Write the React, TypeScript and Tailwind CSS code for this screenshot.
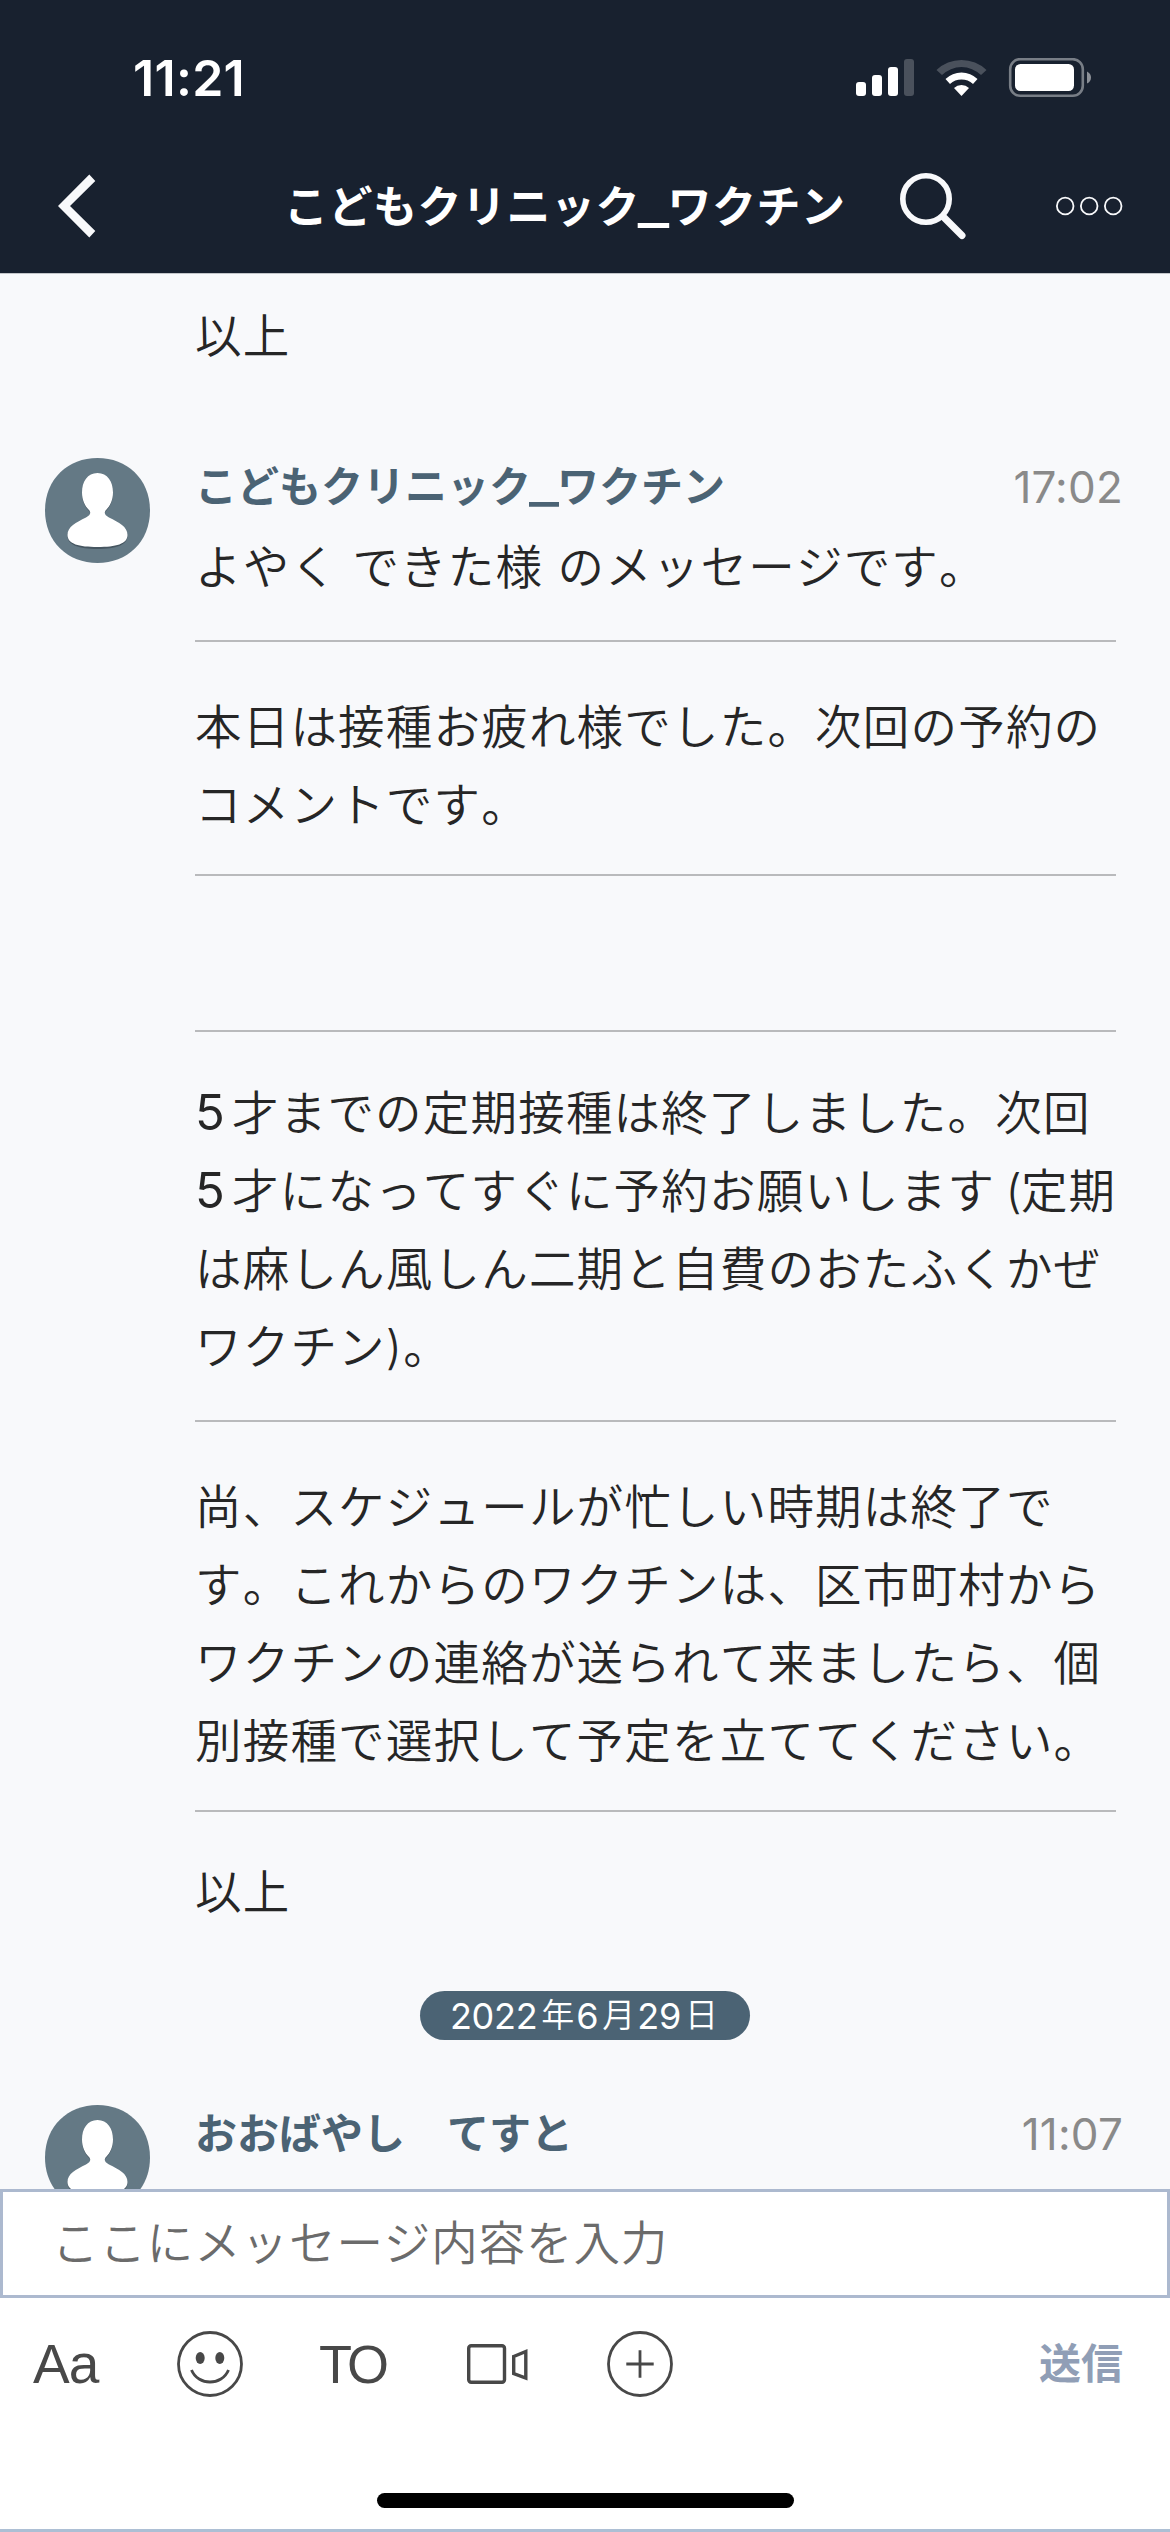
import { Fragment, type ReactNode } from 'react';

type Block = { lines: string[]; rule?: string };

// rule = spacing around the divider above the block
const messageBlocks: Block[] = [
  { lines: ['よやく できた様 のメッセージです。'] },
  { rule: 'mt-[34px] mb-[46px]', lines: ['本日は接種お疲れ様でした。次回の予約の', 'コメントです。'] },
  { rule: 'mt-[30px]', lines: [] },
  { rule: 'mt-[154px] mb-[42px]', lines: ['5才までの定期接種は終了しました。次回', '5才になってすぐに予約お願いします (定期', 'は麻しん風しん二期と自費のおたふくかぜ', 'ワクチン)。'] },
  { rule: 'mt-[34px] mb-[46px]', lines: ['尚、スケジュールが忙しい時期は終了で', 'す。これからのワクチンは、区市町村から', 'ワクチンの連絡が送られて来ましたら、個', '別接種で選択して予定を立ててください。'] },
  { rule: 'mt-[30px] mb-[41px]', lines: ['以上'] },
];

function StatusBar() {
  return (
    <div className="flex h-[156px] items-center justify-between pl-[133px] pr-[79px] text-white">
      <span className="text-[50px] font-semibold leading-none tracking-[0.3px]">11:21</span>
      <svg width="236" height="40" viewBox="855 58 236 40" fill="#fff">
        <rect x="856" y="82" width="10" height="14" rx="3" />
        <rect x="872" y="75" width="10" height="21" rx="3" />
        <rect x="888" y="67" width="10" height="29" rx="3" />
        <rect x="904" y="59" width="10" height="37" rx="3" opacity="0.22" />
        <path d="M936.5 70 A36 36 0 0 1 986.5 70 L981 75 A28 28 0 0 0 942 75 Z" opacity="0.22" />
        <path d="M945.5 79 A23 23 0 0 1 977.5 79 L973 84 A17 17 0 0 0 950 84 Z" />
        <path d="M954 88 A11 11 0 0 1 969 88 L961.5 96 Z" />
        <rect x="1010.2" y="59.2" width="72.6" height="36.6" rx="10" fill="none" stroke="#fff" strokeOpacity="0.42" strokeWidth="2.6" />
        <rect x="1015" y="64" width="59" height="27" rx="5.5" />
        <path d="M1087 71.5 Q1091 73.5 1091 77.5 Q1091 81.5 1087 83.5 Z" opacity="0.5" />
      </svg>
    </div>
  );
}

function RoomName({ text }: { text: string }) {
  const [head, tail] = text.split('_');
  return (
    <>
      {head}
      {tail && <span className="mx-[3px] inline-block scale-x-150">_</span>}
      {tail}
    </>
  );
}

function NavBar() {
  return (
    <div className="flex h-[117px] items-start">
      <svg className="ml-[57px] mt-[17px]" width="40" height="66" viewBox="57 173 40 66" fill="#f8f9fb">
        <path d="M58 206 L89.3 174.5 L95.3 181 L70 206 L95.3 231 L89.3 237.5 Z" />
      </svg>
      <h1 className="ml-[187px] mt-[21px] w-[571px] whitespace-nowrap text-[44px] font-bold leading-[60px] tracking-[0.5px] text-white">
        <RoomName text="こどもクリニック_ワクチン" />
      </h1>
      <svg className="ml-[42px] mt-[15px]" width="70" height="70" viewBox="897 171 70 70" fill="none" stroke="#f8f9fb" strokeWidth="5.6">
        <circle cx="926" cy="199" r="23.2" />
        <path d="M943.5 217 L962 235.5" strokeWidth="7" strokeLinecap="round" />
      </svg>
      <svg className="ml-[88px] mt-[40px]" width="68" height="20" viewBox="1055 196 68 20" fill="none" stroke="#f8f9fb" strokeWidth="1.8">
        <circle cx="1065.2" cy="206" r="8.3" />
        <circle cx="1089.2" cy="206" r="8.3" />
        <circle cx="1113.2" cy="206" r="8.3" />
      </svg>
    </div>
  );
}

function Avatar() {
  return (
    <svg className="ml-[45px] w-[105px] shrink-0" width="105" height="105" viewBox="0 0 105 105">
      <path d="M52.5 0 C82 0 105 21 105 52.5 C105 84 82 105 52.5 105 C23 105 0 84 0 52.5 C0 21 23 0 52.5 0 Z" fill="#647985" />
      <path
        d="M52.5 16 C42.5 16 37 24.5 37 35.5 C37 43 40 49 43.5 52.5 C46.5 55.5 45.5 58 41 60.5 C31 65.5 22.5 69.5 22.5 78 C22.5 87 34 91 52.5 91 C71 91 82.5 87 82.5 78 C82.5 69.5 74 65.5 64 60.5 C59.5 58 58.5 55.5 61.5 52.5 C65 49 68 43 68 35.5 C68 24.5 62.5 16 52.5 16 Z"
        fill="#465661"
      />
      <path
        d="M52.5 15 C42.5 15 37 23.5 37 34.5 C37 42 40 48 43.5 51.5 C46.5 54.5 45.5 57 41 59.5 C31 64.5 22.5 68.5 22.5 77 C22.5 86 34 89 52.5 89 C71 89 82.5 86 82.5 77 C82.5 68.5 74 64.5 64 59.5 C59.5 57 58.5 54.5 61.5 51.5 C65 48 68 42 68 34.5 C68 23.5 62.5 15 52.5 15 Z"
        fill="#fff"
      />
    </svg>
  );
}

function Message({ name, time, children }: { name: string; time: string; children?: ReactNode }) {
  return (
    <article className="flex shrink-0 items-start">
      <Avatar />
      <div className="ml-[45px] w-[928px]">
        <header className="flex h-[58px] items-center justify-between whitespace-nowrap">
          <span className="text-[42px] font-bold leading-none text-[#4b6374]">
            <RoomName text={name} />
          </span>
          <span className="text-[44px] leading-none tracking-[0.2px] text-[#8a8a8a] [font-kerning:normal]">{time}</span>
        </header>
        {children}
      </div>
    </article>
  );
}

function Line({ text }: { text: string }) {
  return (
    <p className="h-[78px] whitespace-nowrap text-[46.5px] font-[350] leading-[78px] tracking-[1.2px] text-[#262626]">
      {text.split(/(\d|\()/).map((part, i) => {
        if (part === '(') return <span key={i} className="-ml-[4px] -mr-[2px]">(</span>;
        if (/^\d$/.test(part)) return <span key={i} className="mr-[6px] text-[49px] font-normal leading-none">{part}</span>;
        return part;
      })}
    </p>
  );
}

function Composer() {
  return (
    <footer className="flex h-[343px] shrink-0 flex-col border-b-[3px] border-[#adbfd4] bg-white">
      <div className="flex h-[109px] items-center border-[3px] border-[#acb9cf] pl-[49px] text-[46.5px] font-[350] tracking-[0.9px] text-[#6b6b6b]">
        ここにメッセージ内容を入力
      </div>
      <div className="flex h-[132px] items-center text-[#484848]">
        <span className="ml-[33px] w-[144px] font-['Liberation_Sans',sans-serif] text-[55px] leading-none tracking-[-1px]">Aa</span>
        <svg width="66" height="66" viewBox="0 0 66 66" fill="none" stroke="#484848" strokeWidth="2.8">
          <circle cx="33" cy="33" r="31.5" />
          <ellipse cx="23.2" cy="27" rx="4.5" ry="6" fill="#484848" stroke="none" />
          <ellipse cx="42.8" cy="27" rx="4.5" ry="6" fill="#484848" stroke="none" />
          <path d="M14.5 39 C21 55 45 55 51.5 39" />
        </svg>
        <span className="ml-[76px] w-[148px] font-['Liberation_Sans',sans-serif] text-[54px] leading-none tracking-[-5px]">TO</span>
        <svg width="61" height="42" viewBox="467 2343 61 42" fill="none" stroke="#484848" strokeWidth="3.4">
          <rect x="468.7" y="2345.7" width="35.8" height="36.6" rx="2.5" />
          <path d="M513.7 2356.5 L525.8 2351.5 V2378 L513.7 2373.5 Z" />
        </svg>
        <svg className="ml-[79px]" width="66" height="66" viewBox="0 0 66 66" fill="none" stroke="#484848" strokeWidth="2.8">
          <circle cx="33" cy="33" r="31.5" />
          <path d="M19.3 33 H46.7 M33 19.3 V46.7" />
        </svg>
        <span className="ml-auto mr-[47px] text-[42px] font-bold leading-none text-[#909eb6]">送信</span>
      </div>
      <div className="mx-auto mt-[63px] h-[15px] w-[417px] rounded-full bg-black" />
    </footer>
  );
}

function DatePill({ parts }: { parts: [string, string][] }) {
  return (
    <div className="mx-auto flex h-[49px] w-[330px] shrink-0 items-center justify-center rounded-full bg-[#4b6374] text-[36px] leading-none text-white">
      {parts.map(([num, unit]) => (
        <Fragment key={unit}>
          <span className="tracking-[-0.3px]">{num}</span>
          <span className="ml-[4px] mr-[2px] text-[33px] font-[350]">{unit}</span>
        </Fragment>
      ))}
    </div>
  );
}

export default function App() {
  return (
    <div className="flex h-[2532px] w-[1170px] flex-col overflow-hidden bg-[#f8f9fb] font-[Inter,'Noto_Sans_CJK_JP',sans-serif] [font-kerning:none]">
      <div className="shrink-0 bg-[#18212f]">
        <StatusBar />
        <NavBar />
      </div>
      <main className="flex h-[1916px] shrink-0 flex-col overflow-hidden border-t border-[#c3c6ca]">
        <div className="ml-[195px] mt-[23px] h-[161px] shrink-0">
          <Line text="以上" />
        </div>
        <Message name="こどもクリニック_ワクチン" time="17:02">
          <div className="mt-[12px] w-[921px]">
            {messageBlocks.map(({ lines, rule }, i) => (
              <Fragment key={i}>
                {rule && <hr className={`${rule} border-0 border-t-2 border-[#b9babc]`} />}
                {lines.map((line) => (
                  <Line key={line} text={line} />
                ))}
              </Fragment>
            ))}
          </div>
        </Message>
        <div className="mt-[60px] mb-[65px] flex shrink-0">
          <DatePill parts={[['2022', '年'], ['6', '月'], ['29', '日']]} />
        </div>
        <Message name="おおばやし　てすと" time="11:07" />
      </main>
      <Composer />
    </div>
  );
}
